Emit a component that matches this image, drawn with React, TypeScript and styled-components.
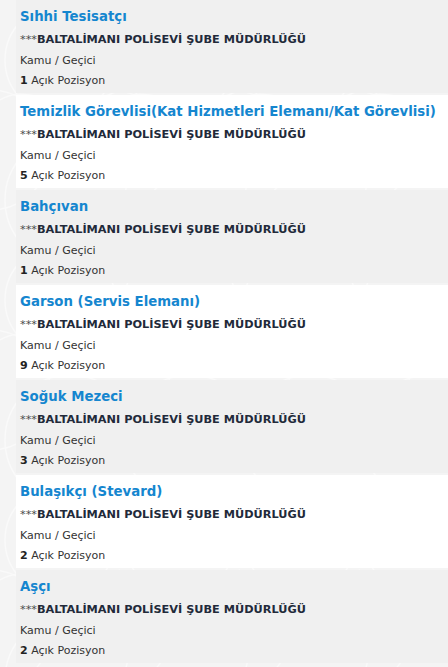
import React from "react";
import styled, { createGlobalStyle } from "styled-components";

const patternSvg = encodeURIComponent(
  `<svg xmlns="http://www.w3.org/2000/svg" width="120" height="240" viewBox="0 0 120 240"><g fill="none" stroke="#ffffff" stroke-width="1.5" opacity="0.5"><circle cx="60" cy="60" r="55"/><circle cx="-10" cy="150" r="60"/><circle cx="70" cy="200" r="65"/><path d="M0 100 C 30 80, 60 120, 120 90"/></g></svg>`
);

const GlobalStyle = createGlobalStyle`
  html, body {
    margin: 0;
    padding: 0;
  }
  body {
    background-color: #f4f4f4;
    background-image: url("data:image/svg+xml,${patternSvg}");
    font-family: Verdana, "DejaVu Sans", sans-serif;
  }
`;

const List = styled.ul`
  list-style: none;
  margin: 0;
  padding: 0 0 0 16px;
  display: flex;
  flex-direction: column;
  gap: 2px;
`;

const Item = styled.li<{ $alt: boolean }>`
  background: ${(p) => (p.$alt ? "#ffffff" : "#f0f0f0")};
  height: 93px;
  box-sizing: border-box;
  padding: 7px 4px 0 4px;
  display: flex;
  flex-direction: column;
`;

const Title = styled.a`
  color: #1586cf;
  font-weight: bold;
  font-size: 13.3px;
  line-height: 20px;
  text-decoration: none;
  white-space: nowrap;
`;

const Company = styled.div`
  color: #222a3a;
  font-weight: bold;
  font-size: 11.3px;
  line-height: 20px;
  margin: 3px 0 1px;
`;

const Stars = styled.span`
  color: #4a4a4a;
  font-weight: normal;
`;

const Meta = styled.div`
  color: #333;
  font-size: 11px;
  line-height: 20px;
`;

const Count = styled.b`
  color: #222;
`;

const jobs = [
  { title: "Sıhhi Tesisatçı", count: 1 },
  { title: "Temizlik Görevlisi(Kat Hizmetleri Elemanı/Kat Görevlisi)", count: 5 },
  { title: "Bahçıvan", count: 1 },
  { title: "Garson (Servis Elemanı)", count: 9 },
  { title: "Soğuk Mezeci", count: 3 },
  { title: "Bulaşıkçı (Stevard)", count: 2 },
  { title: "Aşçı", count: 2 },
];

export default function App() {
  return (
    <>
      <GlobalStyle />
      <List>
        {jobs.map((j, i) => (
          <Item key={i} $alt={i % 2 === 1}>
            <Title href="#">{j.title}</Title>
            <Company>
              <Stars>***</Stars>BALTALİMANI POLİSEVİ ŞUBE MÜDÜRLÜĞÜ
            </Company>
            <Meta>Kamu / Geçici</Meta>
            <Meta>
              <Count>{j.count}</Count> Açık Pozisyon
            </Meta>
          </Item>
        ))}
      </List>
    </>
  );
}
